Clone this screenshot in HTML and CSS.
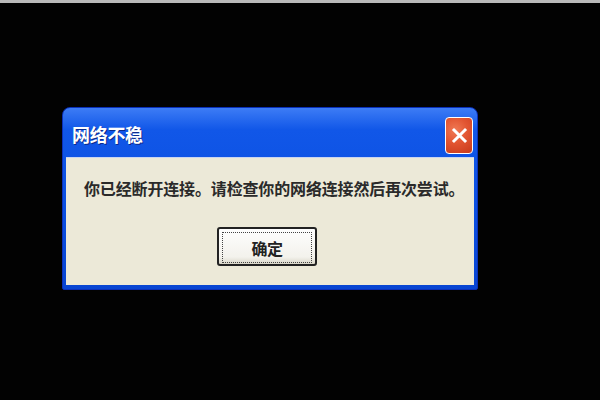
FILE: index.html
```html
<!DOCTYPE html>
<html lang="zh-CN">
<head>
<meta charset="utf-8">
<link rel="stylesheet" href="styles.css">
</head>
<body>
<div class="screen">
  <div class="dialog">
    <div class="titlebar">
      <span class="title">网络不稳</span>
      <button class="close" aria-label="关闭">
        <svg width="17" height="17" viewBox="0 0 17 17"><path d="M3 3 L14 14 M14 3 L3 14" stroke="#fff" stroke-width="3" stroke-linecap="square"/></svg>
      </button>
    </div>
    <div class="content">
      <p class="message">你已经断开连接。请检查你的网络连接然后再次尝试。</p>
      <div class="actions">
        <button class="ok"><span class="focus">确定</span></button>
      </div>
    </div>
  </div>
</div>
</body>
</html>
```

FILE: styles.css
```css
html, body {
  margin: 0;
  padding: 0;
  background: #000;
}
.screen {
  width: 600px;
  height: 400px;
  box-sizing: border-box;
  border-top: 3px solid #b9b9b9;
  padding-top: 104px;
  padding-left: 62px;
  background: #020202;
  font-family: "Noto Sans CJK SC", sans-serif;
}
.dialog {
  width: 416px;
  height: 183px;
  box-sizing: border-box;
  background: linear-gradient(180deg, #3d7cf5 0%, #1157e8 12%, #0a4ee0 60%, #0845d2 100%);
  border-radius: 8px 8px 2px 2px;
  border: 1px solid #0a2fb8;
  display: flex;
  flex-direction: column;
  padding: 0 3px 4px 3px;
}
.titlebar {
  height: 49px;
  display: flex;
  align-items: center;
  justify-content: space-between;
  padding-left: 6px;
  padding-right: 1px;
}
.title {
  color: #fff;
  font-weight: 700;
  font-size: 18px;
  letter-spacing: -0.3px;
  text-shadow: 1px 1px 0 #0b2a8c;
  margin-top: 2px;
}
.close {
  width: 28px;
  height: 37px;
  margin-top: 6px;
  padding: 0;
  border: 1.5px solid #fff;
  border-radius: 4px;
  background: radial-gradient(circle at 35% 35%, #f07a55 0%, #e25531 45%, #c7391b 100%);
  display: flex;
  align-items: center;
  justify-content: center;
}
.content {
  flex: 1;
  background: #ece9d8;
  border-top: 1px solid #c9d4f0;
  display: flex;
  flex-direction: column;
  align-items: center;
}
.message {
  margin: 19px 0 0 0;
  align-self: flex-start;
  padding-left: 18px;
  font-size: 16px;
  font-weight: 700;
  letter-spacing: -0.15px;
  color: #2a2a2a;
  line-height: 22px;
}
.actions {
  margin-top: 28px;
  display: flex;
  justify-content: center;
  padding-right: 6px;
}
.ok {
  width: 100px;
  height: 39px;
  box-sizing: border-box;
  border: 2px solid #222;
  border-radius: 3px;
  background: linear-gradient(180deg, #fefefe 0%, #f3f2ec 80%, #d9d6c8 100%);
  padding: 3px;
  font-family: "Noto Sans CJK SC", sans-serif;
}
.focus {
  display: flex;
  align-items: center;
  justify-content: center;
  height: 100%;
  border: 1px dotted #444;
  font-size: 16px;
  font-weight: 700;
  color: #222;
  letter-spacing: -0.5px;
}
```
